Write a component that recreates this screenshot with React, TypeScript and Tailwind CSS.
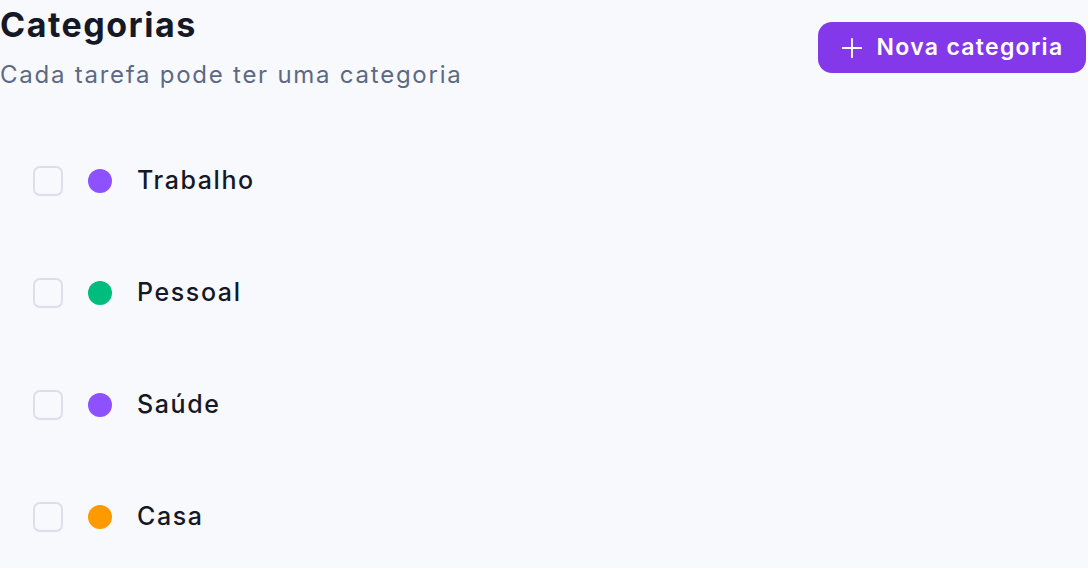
import React from "react";

interface Category {
    name: string;
    color: string;
}

const categories: Category[] = [
    { name: "Trabalho", color: "bg-[#8e51ff]" },
    { name: "Pessoal", color: "bg-[#00bc7d]" },
    { name: "Saúde", color: "bg-[#8e51ff]" },
    { name: "Casa", color: "bg-[#fe9a00]" },
];

function PlusIcon() {
    return (
        <svg width="22" height="22" viewBox="0 0 24 24" fill="none" stroke="currentColor" strokeWidth="2" strokeLinecap="round">
            <path d="M12 2v20M2 12h20" />
        </svg>
    );
}

export default function App() {
    return (
        <div
            className="w-[1088px] h-[568px] bg-[#f8f9fd] overflow-hidden"
            style={{ fontFamily: "Inter, 'Noto Sans', sans-serif" }}
        >
            <div className="flex items-start justify-between pr-[2px]">
                <div className="pt-[5px]">
                    <h1 className="text-[34px] leading-[40px] font-bold text-[#151826] tracking-[1.5px]">
                        Categorias
                    </h1>
                    <p className="text-[24px] leading-[32px] text-[#5d6984] mt-[14px] tracking-[1.75px]">
                        Cada tarefa pode ter uma categoria
                    </p>
                </div>
                <button className="mt-[22px] h-[51px] w-[268px] rounded-[14px] bg-[#8339ea] text-white flex items-center justify-center gap-[14px] text-[23px] font-semibold tracking-[1.3px]">
                    <PlusIcon />
                    Nova categoria
                </button>
            </div>

            <ul className="mt-[75px] flex flex-col gap-[82px] pl-[33px]">
                {categories.map((c) => (
                    <li key={c.name} className="flex items-center h-[30px]">
                        <span className="w-[30px] h-[30px] rounded-[7px] border-2 border-[#dcdfe9] bg-[#f8f9fd]" />
                        <span className={`ml-[25px] w-[24px] h-[24px] rounded-full ${c.color}`} />
                        <span className="ml-[25px] text-[25px] font-medium text-[#151826] tracking-[1.6px]">
                            {c.name}
                        </span>
                    </li>
                ))}
            </ul>
        </div>
    );
}
